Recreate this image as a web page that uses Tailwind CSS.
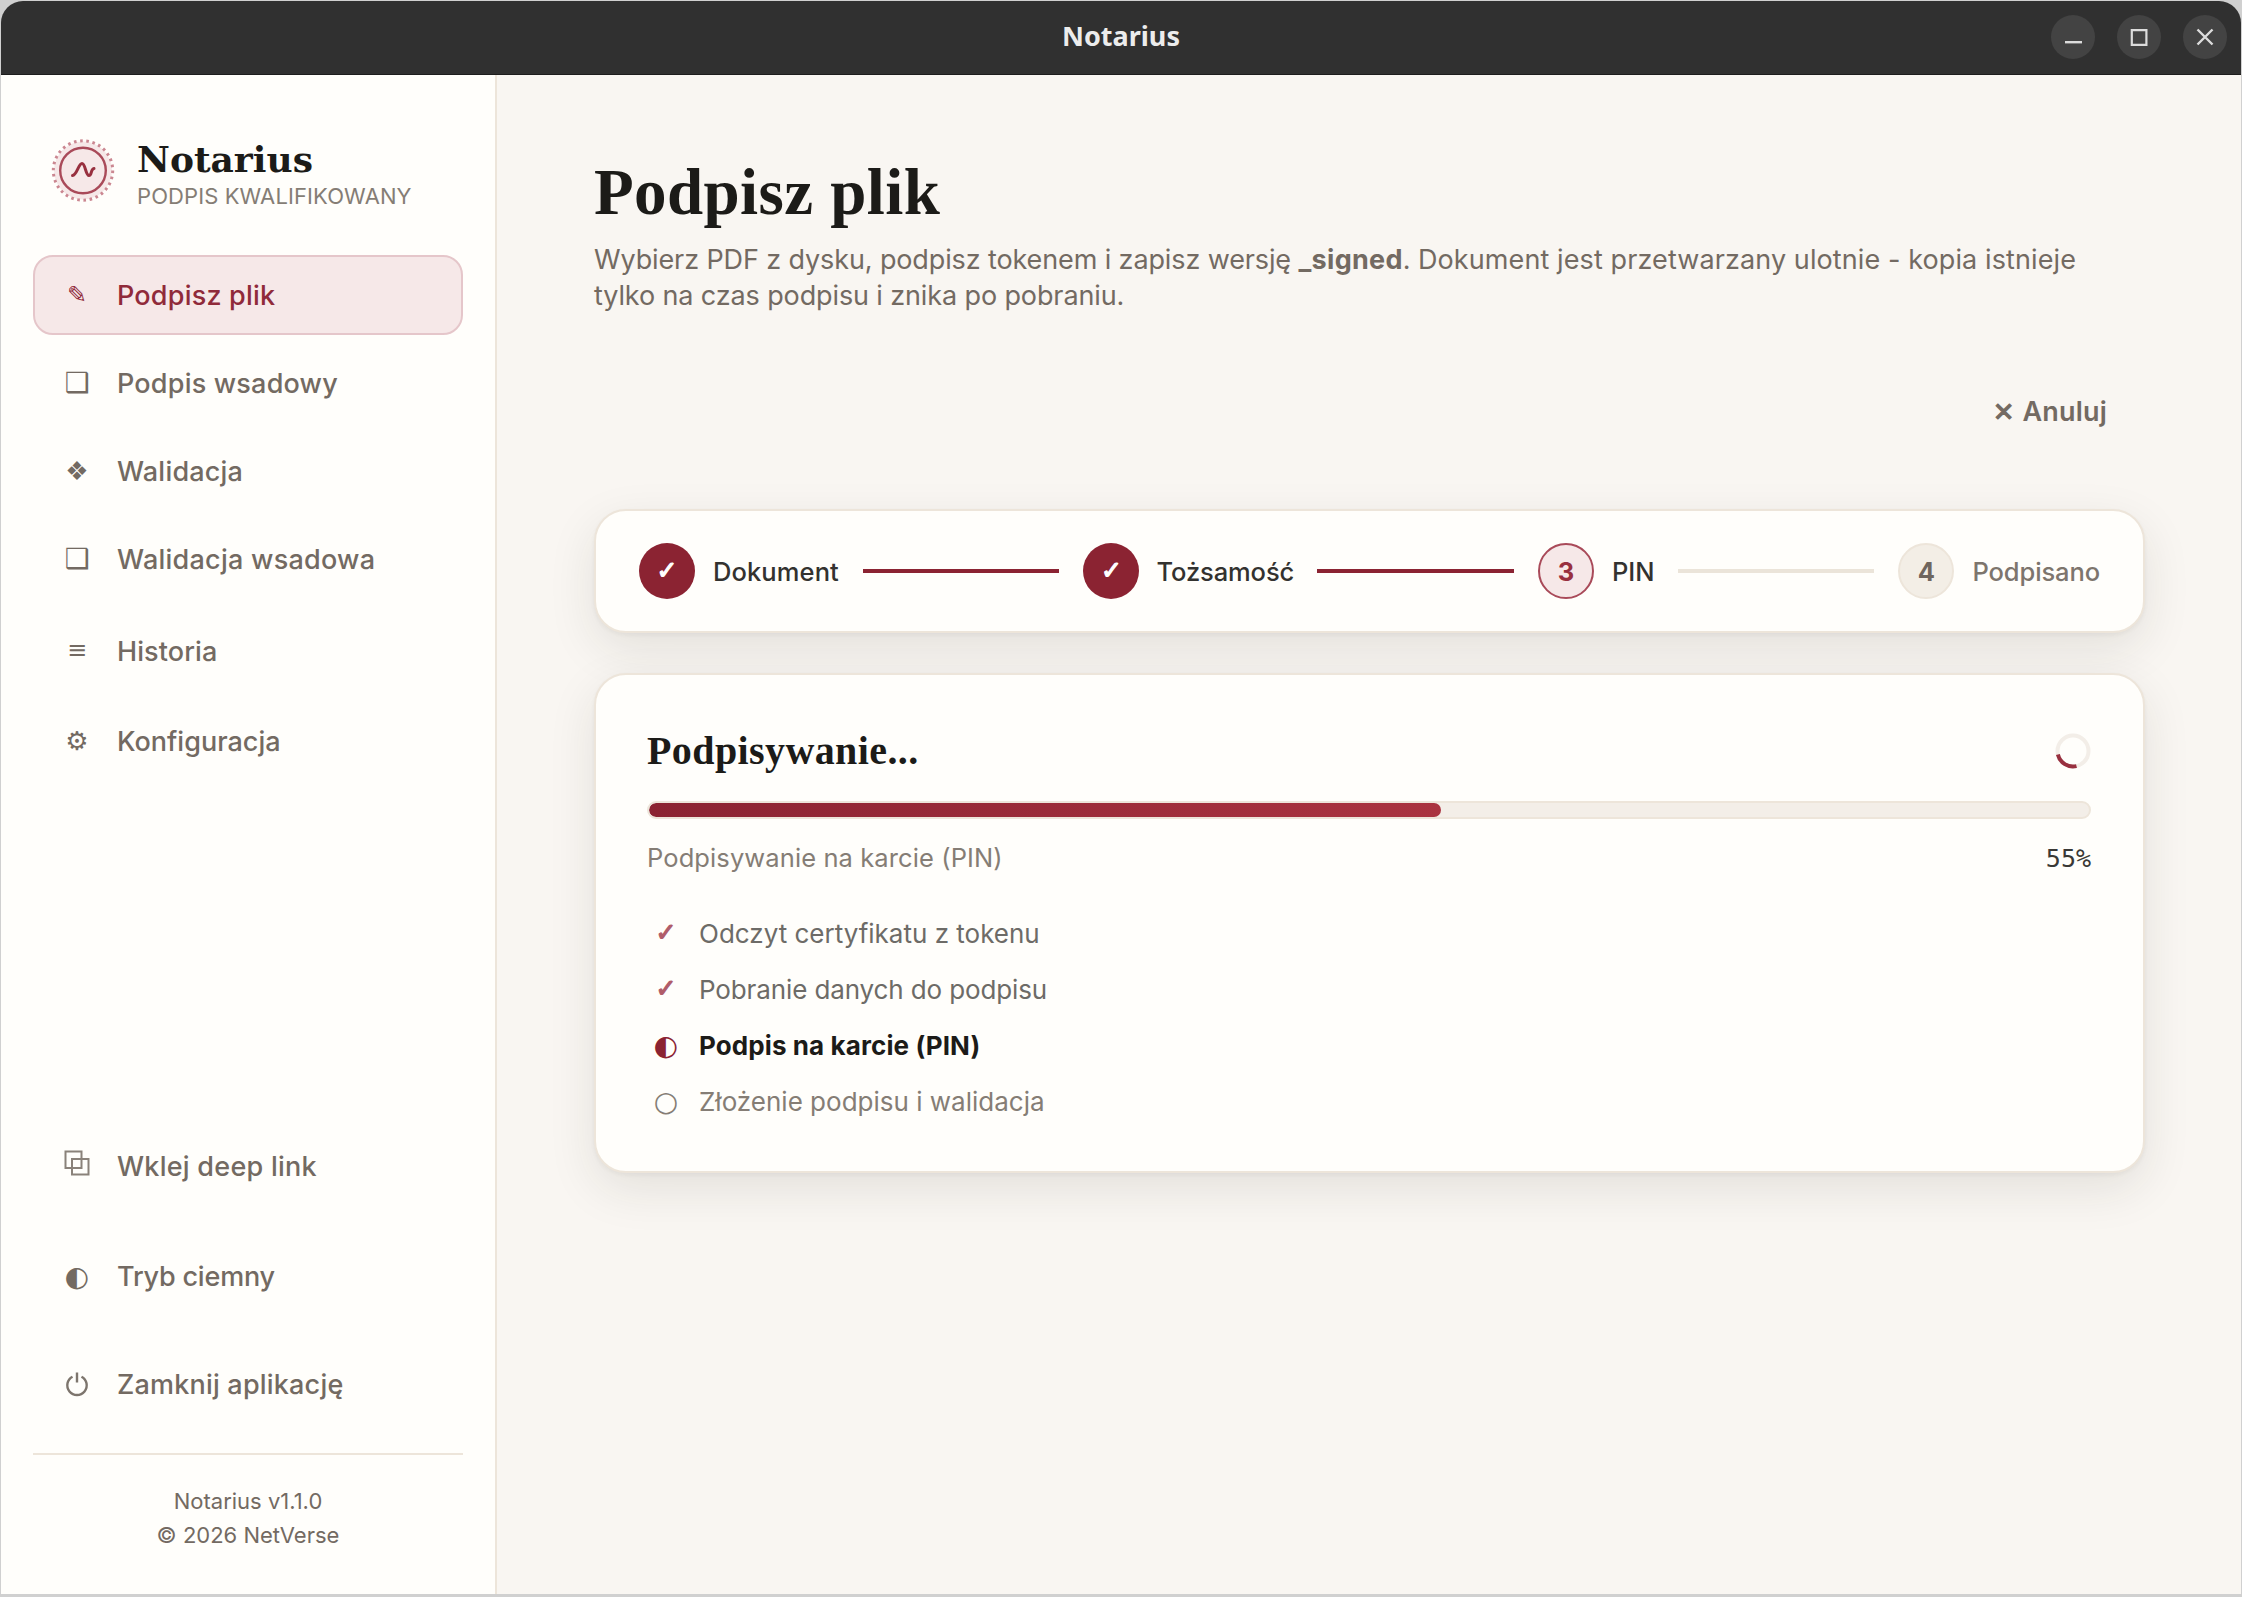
<!doctype html>
<html lang="pl">
<head>
  <meta charset="UTF-8">
  <meta name="viewport" content="width=device-width, initial-scale=1.0">
  <script src="https://cdn.jsdelivr.net/npm/@tailwindcss/browser@4"></script>
  <title>Notarius</title>
</head>
<body class="w-[2242px] h-[1597px] overflow-hidden bg-[#d0d0d0] font-['Inter','Liberation_Sans',sans-serif] text-[#736a62]">
  <div class="flex flex-col mx-[1px] h-full pt-[1px] pb-[3px]">

    <!-- Title bar -->
    <header class="relative flex items-center justify-center h-[74px] shrink-0 rounded-t-[22px] bg-[#303030] border-b border-[#1d1d1d]">
      <span class="pb-[3px] font-['Noto_Sans',sans-serif] font-bold text-[27px] leading-[70px] text-[#ececec]">Notarius</span>
      <div class="absolute right-[14px] top-[14px] flex gap-[22px]">
        <span class="size-[44px] rounded-full bg-[#434343] flex items-center justify-center">
          <svg class="size-[44px]" viewBox="0 0 44 44" fill="none" stroke="#dcdcdc" stroke-width="2.4"><path d="M14 27.2h17"/></svg>
        </span>
        <span class="size-[44px] rounded-full bg-[#434343] flex items-center justify-center">
          <svg class="size-[44px]" viewBox="0 0 44 44" fill="none" stroke="#dcdcdc" stroke-width="2.2"><path d="M14.8 15.2h14.600v14.600h-14.600z"/></svg>
        </span>
        <span class="size-[44px] rounded-full bg-[#434343] flex items-center justify-center">
          <svg class="size-[44px]" viewBox="0 0 44 44" fill="none" stroke="#dcdcdc" stroke-width="2.4"><path d="M14.500 14.500l15 15M29.500 14.500l-15 15"/></svg>
        </span>
      </div>
    </header>

    <div class="flex grow">
      <!-- Sidebar -->
      <aside class="w-[496px] shrink-0 flex flex-col bg-[#fffefb] border-r-2 border-[#ede5da] px-[32px] pt-[60px] pb-[42px]">
        <div class="flex items-center h-[72px] pl-[17px]">
          <svg class="size-[66px]" viewBox="0 0 66 66" fill="none">
            <circle cx="33" cy="32.500" r="29" fill="#f6e8e8"/>
            <circle cx="33" cy="32.500" r="29.700" stroke="#cb8791" stroke-width="3" stroke-dasharray="2.600 3.620"/>
            <circle cx="33" cy="32.500" r="22.800" stroke="#a94a59" stroke-width="2.400"/>
            <path d="M22.500 37.500c4.500-.5 6-12 9.500-12s3.500 12 7 12c3 0 1.500-6.500 5-7" stroke="#98303f" stroke-width="3" stroke-linecap="round"/>
          </svg>
          <div class="pl-[21px] pt-[6px]">
            <div class="font-['DejaVu_Serif',serif] font-bold text-[36px] leading-[42px] -mt-[1px] text-[#1c1b18]">Notarius</div>
            <div class="mt-[2px] -mb-[1px] text-[22px] leading-[28px] tracking-[0.1px] whitespace-nowrap text-[#857d75]">PODPIS KWALIFIKOWANY</div>
          </div>
        </div>

        <nav class="flex flex-col gap-[8px] mt-[48px] font-medium text-[27px]">
          <a class="flex items-center h-[80px] pl-[25px] rounded-[20px] border-2 border-[#e5c6ca] bg-[#f6e8e8] text-[#902a3a]">
            <span class="w-[34px] text-center font-['DejaVu_Sans'] font-normal text-[24px]">✎</span><span class="pl-[23px] pt-[2px] tracking-[0.2px]">Podpisz plik</span>
          </a>
          <a class="flex items-center h-[80px] pl-[27px]">
            <span class="w-[34px] text-center font-['DejaVu_Sans'] font-normal text-[28px]">❑</span><span class="pl-[23px] pt-[2px] tracking-[0.2px]">Podpis wsadowy</span>
          </a>
          <a class="flex items-center h-[80px] pl-[27px]">
            <span class="w-[34px] text-center font-['DejaVu_Sans'] font-normal text-[26px]">❖</span><span class="pl-[23px] pt-[2px] tracking-[0.2px]">Walidacja</span>
          </a>
          <a class="flex items-center h-[80px] pl-[27px]">
            <span class="w-[34px] text-center font-['DejaVu_Sans'] font-normal text-[28px]">❑</span><span class="pl-[23px] pt-[2px] tracking-[0.25px]">Walidacja wsadowa</span>
          </a>
          <a class="flex items-center h-[88px] pl-[27px]">
            <span class="w-[34px] pb-[3px] text-center font-['DejaVu_Sans'] font-normal text-[24px]">≡</span><span class="pl-[23px] pt-[2px] tracking-[0.1px]">Historia</span>
          </a>
          <a class="flex items-center h-[76px] pl-[27px]">
            <span class="w-[34px] text-center font-['DejaVu_Sans'] font-normal text-[26px]">⚙</span><span class="pl-[23px] pt-[2px]">Konfiguracja</span>
          </a>
        </nav>

        <div class="mt-auto font-medium text-[27px]">
          <a class="flex items-center h-[110px] pl-[27px]">
            <svg class="w-[34px] h-[26px] -mt-[8px]" viewBox="0 0 34 26" fill="none" stroke="#8a827a" stroke-width="2">
              <path d="M5.500 1.500h16v16.500h-16zM12 9h16.500v15.500h-16.500z"/>
            </svg>
            <span class="pl-[23px] tracking-[0.25px]">Wklej deep link</span>
          </a>
          <a class="flex items-center h-[110px] pl-[27px]">
            <span class="w-[34px] text-center font-['DejaVu_Sans'] font-normal text-[28px]">◐</span><span class="pl-[23px] tracking-[-0.2px]">Tryb ciemny</span>
          </a>
          <a class="flex items-center h-[106px] pl-[27px]">
            <svg class="w-[34px] h-[26px]" viewBox="0 0 34 26" fill="none" stroke="#7d756d" stroke-width="2.400">
              <path d="M12.500 4.700a9.700 9.700 0 1 0 9 0M17 .5v10"/>
            </svg>
            <span class="pl-[23px] tracking-[0.2px]">Zamknij aplikację</span>
          </a>
        </div>

        <footer class="mt-[15px] pt-[29px] border-t-2 border-[#ede5da] text-center text-[22px] leading-[34px]">
          <p>Notarius v1.1.0</p>
          <p>© 2026 NetVerse</p>
        </footer>
      </aside>

      <!-- Main content -->
      <main class="grow bg-[#f9f6f2] pl-[97px] pr-[96px] pt-[79px]">
        <h1 class="font-['Liberation_Serif',serif] font-bold text-[65px] leading-[76px] tracking-[0.4px] text-[#1c1b18]">Podpisz plik</h1>
        <p class="mt-[12px] text-[27px] leading-[36px] tracking-[-0.12px] whitespace-nowrap">Wybierz PDF z dysku, podpisz tokenem i zapisz wersję <b class="tracking-[0.3px]">_signed</b>. <span class="tracking-[0.1px]">Dokument jest przetwarzany ulotnie - kopia istnieje</span><br>tylko na czas podpisu i znika po pobraniu.</p>

        <div class="flex justify-end mt-[58px] pr-[38px] h-[80px] items-center font-semibold text-[27px]">
          <span class="font-['DejaVu_Sans'] text-[26px] pr-[8px] [-webkit-text-stroke:1px]">✕</span><span class="tracking-[0.2px]">Anuluj</span>
        </div>

        <!-- Steps -->
        <section class="flex items-center mt-[57px] h-[124px] px-[43px] rounded-[32px] border-2 border-[#ede5da] bg-[#fffefb] shadow-[0_2px_4px_rgba(40,40,30,0.05),0_16px_48px_rgba(40,40,30,0.10)] font-medium text-[25.5px] text-[#33322f]">
          <span class="size-[56px] shrink-0 rounded-full bg-[#8b2332] text-white font-['DejaVu_Sans'] font-bold text-[25px] [-webkit-text-stroke:1.2px] flex items-center justify-center">✓</span>
          <span class="ml-[18px] w-[128px] pt-[3px] tracking-[0.1px]">Dokument</span>
          <span class="grow ml-[22px] mr-[24px] h-[4px] bg-[#8b2332]"></span>
          <span class="size-[56px] shrink-0 rounded-full bg-[#8b2332] text-white font-['DejaVu_Sans'] font-bold text-[25px] [-webkit-text-stroke:1.2px] flex items-center justify-center">✓</span>
          <span class="ml-[17px] w-[139px] pt-[3px] tracking-[-0.1px]">Tożsamość</span>
          <span class="grow ml-[22px] mr-[24px] h-[4px] bg-[#8b2332]"></span>
          <span class="size-[56px] shrink-0 rounded-full border-2 border-[#a94a59] bg-[#f6e8e8] text-[#98303f] font-bold flex items-center justify-center pt-[2px]">3</span>
          <span class="ml-[18px] w-[44px] pt-[3px]">PIN</span>
          <span class="grow ml-[22px] mr-[24px] h-[4px] bg-[#ebe4d9]"></span>
          <span class="size-[56px] shrink-0 rounded-full border-2 border-[#ede5da] bg-[#f3eee6] text-[#6f665e] font-bold flex items-center justify-center pt-[2px]">4</span>
          <span class="ml-[18px] pt-[3px] tracking-[-0.1px] text-[#7d756d]">Podpisano</span>
        </section>

        <!-- Progress -->
        <section class="mt-[40px] h-[500px] pl-[51px] pr-[52px] pt-[50px] rounded-[32px] border-2 border-[#ede5da] bg-[#fffefb] shadow-[0_2px_4px_rgba(40,40,30,0.05),0_16px_48px_rgba(40,40,30,0.10)]">
          <div class="flex items-center justify-between h-[52px]">
            <h2 class="font-['Liberation_Serif',serif] font-bold text-[40px] tracking-[0.4px] text-[#1c1b18]">Podpisywanie...</h2>
            <svg class="size-[36px]" viewBox="0 0 36 36" fill="none" stroke-width="4">
              <circle cx="18" cy="18" r="15.500" stroke="#f3eee8"/>
              <path d="M2.900 21.500A15.500 15.500 0 0 0 21.500 33.100" stroke="#98303f"/>
            </svg>
          </div>
          <div class="mt-[24px] h-[18px] rounded-full border-2 border-[#ede5da] bg-[#f3eee8] overflow-hidden">
            <div class="h-full rounded-full bg-linear-to-r from-[#8b2332] to-[#aa3340]" style="width: 55%"></div>
          </div>
          <div class="flex items-center justify-between mt-[21px] h-[36px]">
            <span class="text-[25.5px] tracking-[0.1px] text-[#857d75]">Podpisywanie na karcie (PIN)</span>
            <span class="pt-[1px] font-['DejaVu_Sans_Mono',monospace] text-[25px] text-[#3a3936]">55%</span>
          </div>
          <ul class="mt-[29px] text-[26px]">
            <li class="flex items-center h-[56px] text-[#6d6b67]"><span class="w-[38px] text-center font-['DejaVu_Sans'] font-bold text-[25px] text-[#b05c69] [-webkit-text-stroke:1.2px]">✓</span><span class="pl-[14px]">Odczyt certyfikatu z tokenu</span></li>
            <li class="flex items-center h-[56px] text-[#6d6b67]"><span class="w-[38px] text-center font-['DejaVu_Sans'] font-bold text-[25px] text-[#b05c69] [-webkit-text-stroke:1.2px]">✓</span><span class="pl-[14px] tracking-[-0.12px]">Pobranie danych do podpisu</span></li>
            <li class="flex items-center h-[56px] text-[#1c1b18] font-bold"><span class="w-[38px] pt-[2px] text-center font-['DejaVu_Sans'] text-[28px] text-[#8b2332]">◐</span><span class="pl-[14px] tracking-[0.1px]">Podpis na karcie (PIN)</span></li>
            <li class="flex items-center h-[56px] text-[#857d75]"><span class="w-[38px] pt-[2px] text-center font-['DejaVu_Sans'] text-[28px]">○</span><span class="pl-[14px]">Złożenie podpisu i walidacja</span></li>
          </ul>
        </section>
      </main>
    </div>
  </div>
</body>
</html>
